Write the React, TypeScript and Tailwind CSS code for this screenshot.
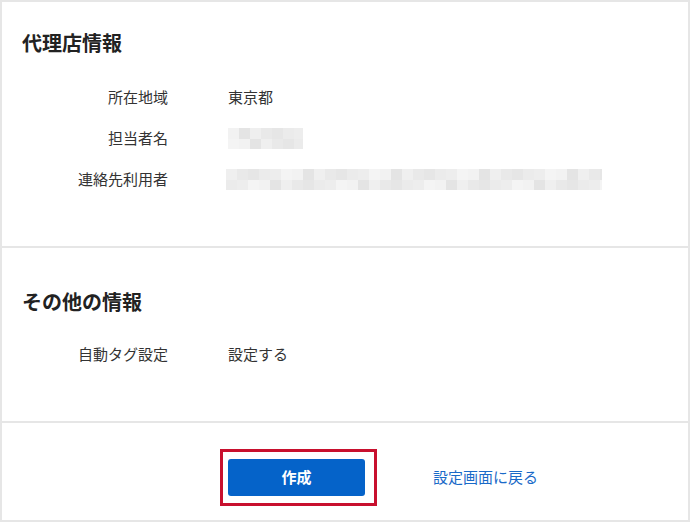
import React from "react";

const font = { fontFamily: '"Noto Sans CJK JP", "Noto Sans", sans-serif' };

function Mosaic({ cols, rows, cell, seed }: { cols: number; rows: number; cell: number; seed: number }) {
  const shades = ["#e6e6e6", "#ebebeb", "#efefef", "#e9e9e9", "#f2f2f2", "#e4e4e4", "#ededed", "#f4f4f4"];
  const cells: string[] = [];
  let s = seed;
  for (let i = 0; i < cols * rows; i++) {
    s = (s * 9301 + 49297) % 233280;
    cells.push(shades[s % shades.length]);
  }
  return (
    <div className="grid" style={{ gridTemplateColumns: `repeat(${cols}, ${cell}px)`, gridAutoRows: `${cell}px` }}>
      {cells.map((c, i) => (
        <div key={i} style={{ background: c }} />
      ))}
    </div>
  );
}

function Row({ label, children }: { label: string; children: React.ReactNode }) {
  return (
    <div className="flex h-[41px] items-center">
      <div className="w-[146px] text-right text-[15px] text-[#333333]">{label}</div>
      <div className="ml-[60px] flex items-center text-[15px] text-[#333333]">{children}</div>
    </div>
  );
}

export default function App() {
  return (
    <div className="w-[690px] h-[522px] bg-white border-2 border-[#e6e6e6] flex flex-col" style={font}>
      <section className="px-5 pt-[27px] pb-[46px] border-b-2 border-[#e6e6e6]">
        <h2 className="text-[20px] leading-[28px] font-bold text-[#222222]">代理店情報</h2>
        <div className="mt-[20px]">
          <Row label="所在地域">東京都</Row>
          <Row label="担当者名">
            <div className="w-[75px] h-[21px] overflow-hidden">
              <Mosaic cols={7} rows={2} cell={11} seed={7} />
            </div>
          </Row>
          <Row label="連絡先利用者">
            <div className="-ml-[2px] w-[376px] h-[21px] overflow-hidden">
              <Mosaic cols={35} rows={2} cell={11} seed={13} />
            </div>
          </Row>
        </div>
      </section>
      <section className="px-5 pt-[40px] pb-[46px] border-b-2 border-[#e6e6e6]">
        <h2 className="text-[20px] leading-[28px] font-bold text-[#222222]">その他の情報</h2>
        <div className="mt-[18px]">
          <Row label="自動タグ設定">設定する</Row>
        </div>
      </section>
      <section className="flex-1 pt-[26px] pl-[218px] flex items-start">
        <div className="flex items-center">
          <div className="border-[3px] border-[#c8102e] pl-[5px] py-[7px] pr-[9px]">
            <button className="w-[137px] h-[37px] rounded-[3px] bg-[#0563c9] text-white text-[15px] font-bold">作成</button>
          </div>
          <a className="ml-[56px] text-[15px] text-[#1a6ac8]">設定画面に戻る</a>
        </div>
      </section>
    </div>
  );
}
